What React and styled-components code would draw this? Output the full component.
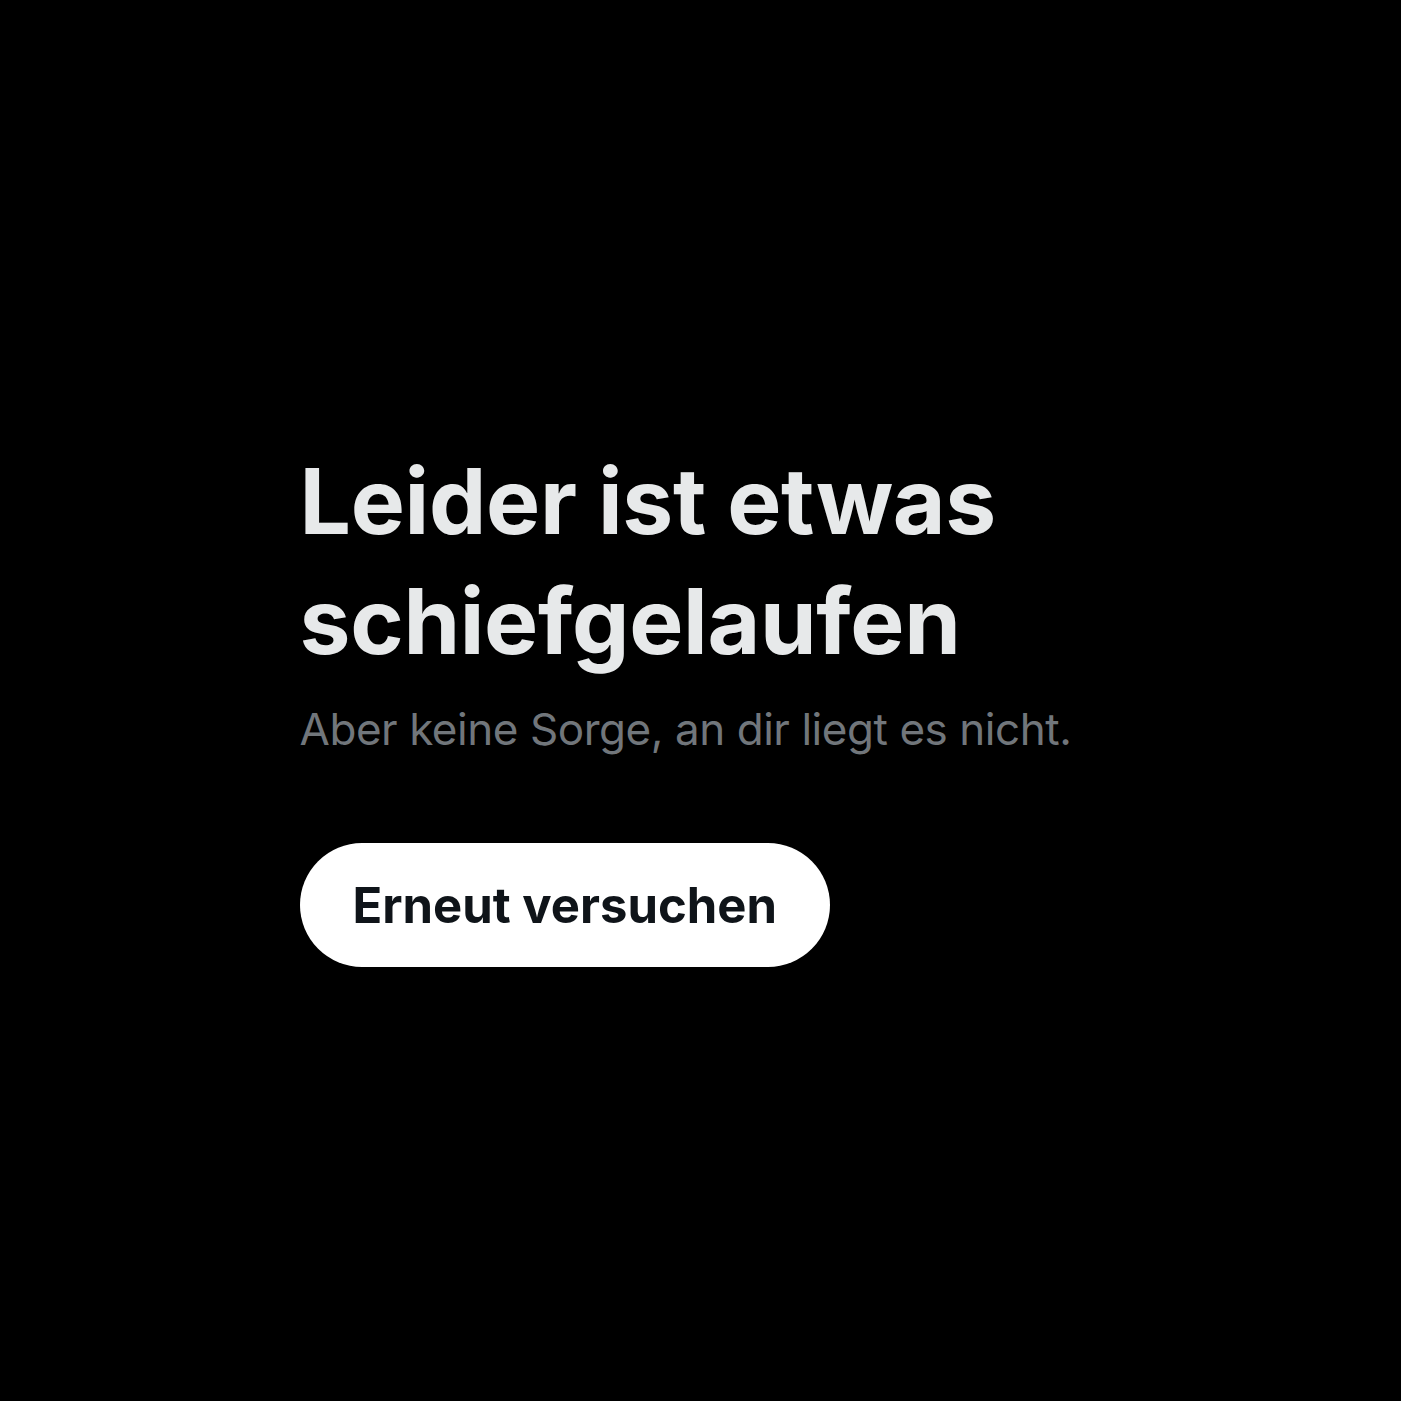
import styled, { createGlobalStyle } from 'styled-components';

const GlobalStyle = createGlobalStyle`
  html, body {
    margin: 0;
    padding: 0;
    background-color: #000;
  }
`;

const Page = styled.main`
  min-height: 100vh;
  display: flex;
  flex-direction: column;
  justify-content: center;
  align-items: center;
  font-family: Inter, 'Noto Sans', 'Liberation Sans', sans-serif;
`;

const Content = styled.section`
  width: 802px;
  display: flex;
  flex-direction: column;
  align-items: flex-start;
  padding-top: 7px;
`;

const Title = styled.h1`
  margin: 0;
  color: #e7e9ea;
  font-size: 91px;
  font-weight: 700;
  line-height: 120px;
  letter-spacing: -0.3px;
`;

const Subtitle = styled.p`
  margin: 18px 0 0;
  color: #71767b;
  font-size: 44px;
  font-weight: 400;
  line-height: 60px;
  letter-spacing: -0.45px;
  white-space: nowrap;
`;

const RetryButton = styled.button`
  margin-top: 84px;
  height: 124px;
  padding: 0 53px;
  border: none;
  border-radius: 999px;
  background-color: #fff;
  color: #0f1419;
  font-family: inherit;
  font-size: 49px;
  font-weight: 700;
  cursor: pointer;
`;

const App = () => {
  return (
    <>
      <GlobalStyle />
      <Page>
        <Content>
          <Title>
            Leider ist etwas
            <br />
            schiefgelaufen
          </Title>
          <Subtitle>Aber keine Sorge, an dir liegt es nicht.</Subtitle>
          <RetryButton type="button">Erneut versuchen</RetryButton>
        </Content>
      </Page>
    </>
  );
};

export default App;
